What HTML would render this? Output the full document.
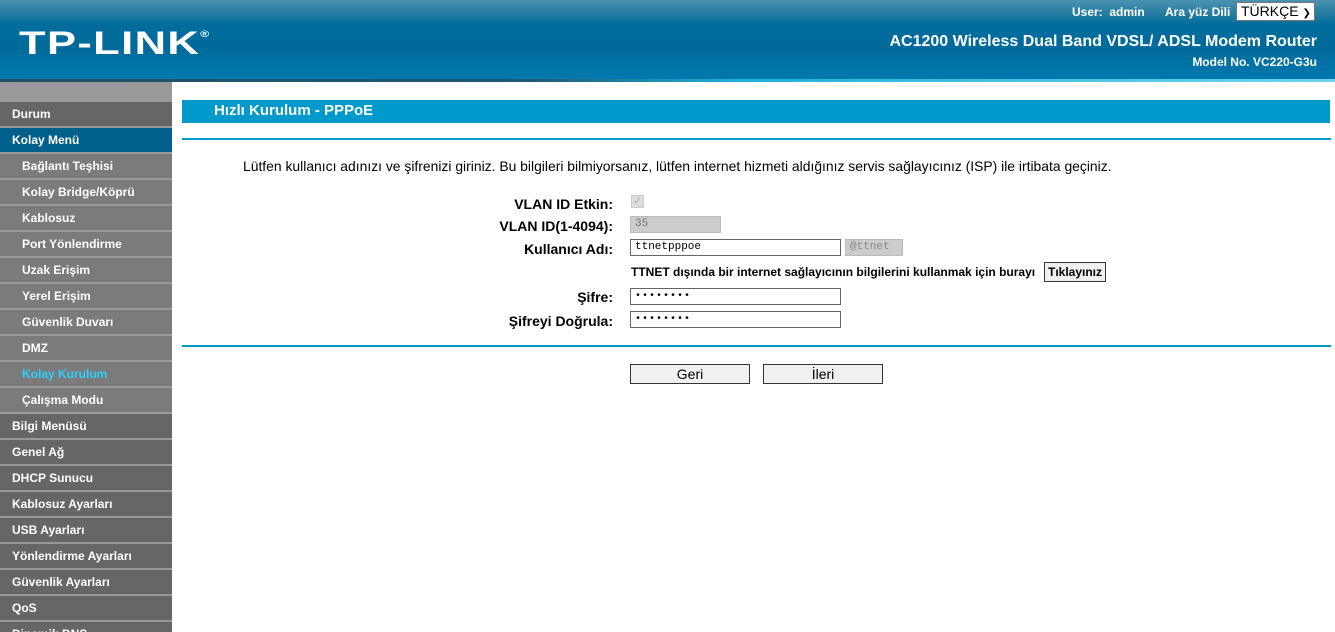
<!DOCTYPE html><html><head><meta charset="utf-8"><style>
*{margin:0;padding:0;box-sizing:border-box}
html,body{width:1335px;height:632px;overflow:hidden}
body{background:#fff;font-family:"Liberation Sans",Arial,sans-serif;position:relative}
.hd{position:absolute;left:0;top:0;width:1335px;height:79px;background:linear-gradient(#4a93b0 0,#2a7fa3 12px,#006c9c 25px,#006b9b 50px,#0079ae 79px)}
.hl{position:absolute;left:0;top:79px;width:1335px;height:3px;background:linear-gradient(90deg,#1f4f66 0,#1e5a75 40%,#1fb0d8 55%,#6fd3ee 100%)}
.logo{position:absolute;left:19px;top:25px;color:#fff;font-weight:bold;font-size:32px;letter-spacing:1px;transform:scaleX(1.36);transform-origin:left}
.logo sup{font-size:9px;vertical-align:top;position:relative;top:4px}
.w{position:absolute;color:#fff;font-weight:bold}
.sel{position:absolute;left:1236px;top:2px;width:79px;height:19px;background:#fff;border:1px solid #777;font-size:14px;color:#000;padding-left:4px;line-height:17px}
.sb{position:absolute;left:0;top:82px;width:172px;height:550px;background:#999}
.it{position:absolute;left:0;width:172px;height:24px;color:#fff;font-size:12px;font-weight:bold;line-height:24px;padding-left:12px}
.m{background:#666}.s{background:#7b7b7b;padding-left:22px}.b{background:#005f8b}
.tb{position:absolute;left:182px;top:100px;width:1148px;height:23px;background:#0099cc;color:#fff;font-weight:bold;font-size:15px;line-height:22px;padding-left:32px}
.ln{position:absolute;left:182px;width:1149px;height:2px;background:#0099cc}
.t{position:absolute;font-size:13px;color:#000}
.lb{position:absolute;right:722px;font-size:14px;font-weight:bold;color:#000}
.in{position:absolute;left:630px;height:17px;border:1px solid #666;background:#fff;font-family:"Liberation Mono",monospace;font-size:11px;padding-left:4px;line-height:15px}
.btn{position:absolute;top:364px;width:120px;height:20px;border:1px solid #333;background:#f0f0f0;font-size:14px;text-align:center;line-height:18px}
</style></head><body>
<div class="hd"></div><div class="hl"></div>
<div class="logo">TP-LINK<sup>®</sup></div>
<div class="w" style="left:1072px;top:5px;font-size:12px">User:&nbsp; admin</div>
<div class="w" style="left:1165px;top:5px;font-size:12px">Ara yüz Dili</div>
<div class="sel">TÜRKÇE <span style="font-size:10px">&#10095;</span></div>
<div class="w" style="right:18px;top:33px;font-size:16px">AC1200 Wireless Dual Band VDSL/ ADSL Modem Router</div>
<div class="w" style="right:18px;top:55px;font-size:12px">Model No. VC220-G3u</div>
<div class="sb"></div>
<div class="it m" style="top:102px">Durum</div>
<div class="it b" style="top:128px">Kolay Menü</div>
<div class="it s" style="top:154px">Bağlantı Teşhisi</div>
<div class="it s" style="top:180px">Kolay Bridge/Köprü</div>
<div class="it s" style="top:206px">Kablosuz</div>
<div class="it s" style="top:232px">Port Yönlendirme</div>
<div class="it s" style="top:258px">Uzak Erişim</div>
<div class="it s" style="top:284px">Yerel Erişim</div>
<div class="it s" style="top:310px">Güvenlik Duvarı</div>
<div class="it s" style="top:336px">DMZ</div>
<div class="it s" style="top:362px;color:#2ad0ff">Kolay Kurulum</div>
<div class="it s" style="top:388px">Çalışma Modu</div>
<div class="it m" style="top:414px">Bilgi Menüsü</div>
<div class="it m" style="top:440px">Genel Ağ</div>
<div class="it m" style="top:466px">DHCP Sunucu</div>
<div class="it m" style="top:492px">Kablosuz Ayarları</div>
<div class="it m" style="top:518px">USB Ayarları</div>
<div class="it m" style="top:544px">Yönlendirme Ayarları</div>
<div class="it m" style="top:570px">Güvenlik Ayarları</div>
<div class="it m" style="top:596px">QoS</div>
<div class="it m" style="top:622px">Dinamik DNS</div>
<div class="tb">Hızlı Kurulum - PPPoE</div>
<div class="ln" style="top:138px"></div>
<div class="t" style="left:243px;top:158px;font-size:13.9px">Lütfen kullanıcı adınızı ve şifrenizi giriniz. Bu bilgileri bilmiyorsanız, lütfen internet hizmeti aldığınız servis sağlayıcınız (ISP) ile irtibata geçiniz.</div>
<div class="lb" style="top:196px">VLAN ID Etkin:</div>
<div style="position:absolute;left:631px;top:195px;width:13px;height:13px;background:#ddd;border:1px solid #ccc;color:#aaa;font-size:10px;line-height:11px;text-align:center">&#10003;</div>
<div class="lb" style="top:218px">VLAN ID(1-4094):</div>
<div class="in" style="top:216px;width:91px;background:#ccc;border-color:#bbb;color:#777">35</div>
<div class="lb" style="top:241px">Kullanıcı Adı:</div>
<div class="in" style="top:239px;width:211px">ttnetpppoe</div>
<div class="in" style="left:845px;top:239px;width:58px;background:#ccc;border-color:#bbb;color:#888">@ttnet</div>
<div class="t" style="left:631px;top:265px;font-size:12px;font-weight:bold">TTNET dışında bir internet sağlayıcının bilgilerini kullanmak için burayı</div>
<div style="position:absolute;left:1044px;top:262px;width:62px;height:20px;border:1px solid #333;background:#f0f0f0;font-size:12px;font-weight:bold;line-height:18px;text-align:center">Tıklayınız</div>
<div class="lb" style="top:289px">Şifre:</div>
<div class="in" style="top:288px;width:211px;font-size:10px;letter-spacing:1px">••••••••</div>
<div class="lb" style="top:313px">Şifreyi Doğrula:</div>
<div class="in" style="top:311px;width:211px;font-size:10px;letter-spacing:1px">••••••••</div>
<div class="ln" style="top:345px"></div>
<div class="btn" style="left:630px">Geri</div>
<div class="btn" style="left:763px">İleri</div>
</body></html>
